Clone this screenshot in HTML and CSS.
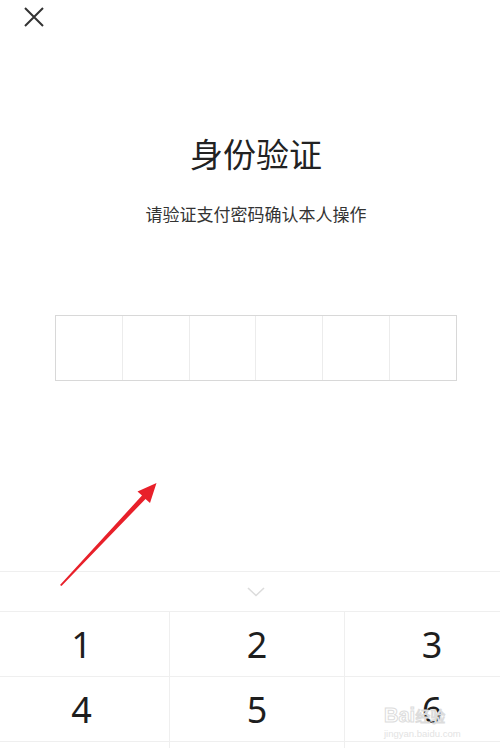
FILE: index.html
```html
<!DOCTYPE html>
<html lang="zh-CN">
<head>
  <meta charset="UTF-8" />
  <meta name="viewport" content="width=device-width, initial-scale=1.0" />
  <title>身份验证</title>
  <link rel="stylesheet" href="styles.css">
</head>
<body>
  <div class="top">
    <svg class="close" width="20" height="20" viewBox="0 0 20 20">
      <path d="M1 1 L19 19 M19 1 L1 19" stroke="#333" stroke-width="2" fill="none" />
    </svg>
  </div>

  <h1 class="title">身份验证</h1>
  <p class="sub">请验证支付密码确认本人操作</p>

  <div class="pwd">
    <span></span><span></span><span></span><span></span><span></span><span></span>
  </div>

  <div class="fold">
    <svg width="18" height="10" viewBox="0 0 18 10">
      <path d="M1 1 L9 8.5 L17 1" stroke="#dcdcdc" stroke-width="1.6" fill="none" />
    </svg>
  </div>

  <div class="keypad">
    <div class="key">1</div>
    <div class="key">2</div>
    <div class="key">3</div>
    <div class="key">4</div>
    <div class="key">5</div>
    <div class="key">6</div>
    <div class="key"></div>
    <div class="key"></div>
    <div class="key"></div>
  </div>

  <!-- red guide arrow drawn over the page -->
  <svg class="arrow" width="500" height="748" viewBox="0 0 500 748">
    <polygon points="60,585 142,495.5 137.5,491.5 156.5,483 150,503 145.5,499 61.5,586" fill="#e8202a" />
  </svg>

  <div class="mark">
    <div class="mark-logo">Bai<span>经验</span></div>
    <div class="mark-url">jingyan.baidu.com</div>
  </div>
</body>
</html>
```

FILE: styles.css
```css
html, body {
  margin: 0;
  padding: 0;
}
body {
  width: 500px;
  height: 748px;
  overflow: hidden;
  position: relative;
  background: #fff;
  color: #222;
  font-family: "Noto Sans CJK SC", "Noto Sans", sans-serif;
}
.top {
  height: 34px;
  padding: 7px 0 0 24px;
  box-sizing: border-box;
}
.close {
  display: block;
}
.title {
  margin: 99px 0 0;
  padding-left: 12px;
  font-size: 33px;
  font-weight: 400;
  line-height: 40px;
  text-align: center;
  color: #222;
}
.sub {
  margin: 29px 0 0;
  padding-left: 12px;
  font-size: 17px;
  line-height: 24px;
  text-align: center;
  color: #333;
}
.pwd {
  display: flex;
  margin: 89px 0 0 55px;
  width: 402px;
  height: 66px;
  box-sizing: border-box;
  border: 1px solid #d8d8d8;
}
.pwd span {
  flex: 1;
  border-left: 1px solid #ececec;
}
.pwd span:first-child {
  border-left: none;
}
.fold {
  margin-top: 190px;
  height: 40px;
  box-sizing: border-box;
  border-top: 1px solid #efefef;
  display: flex;
  align-items: center;
  justify-content: center;
  padding-left: 12px;
}
.fold svg {
  display: block;
}
.keypad {
  display: grid;
  grid-template-columns: repeat(3, 175px);
  grid-auto-rows: 65px;
  margin-left: -6px;
  width: 525px;
}
.key {
  display: flex;
  align-items: center;
  justify-content: center;
  border-top: 1px solid #efefef;
  border-left: 1px solid #efefef;
  font-family: "Noto Sans", sans-serif;
  font-size: 36px;
  color: #1e1e1e;
}
.key:nth-child(3n+1) {
  border-left: none;
}
.arrow {
  position: absolute;
  left: 0;
  top: 0;
  pointer-events: none;
}
.mark {
  position: absolute;
  left: 384px;
  top: 704px;
  font-family: "Liberation Sans", "Noto Sans CJK SC", sans-serif;
}
.mark-logo {
  font-size: 20px;
  font-weight: bold;
  line-height: 22px;
  color: rgba(255, 255, 255, 0.6);
  -webkit-text-stroke: 1px #dcdcdc;
}
.mark-logo span {
  font-size: 15px;
  font-weight: normal;
}
.mark-url {
  font-size: 9.5px;
  line-height: 12px;
  color: #e3e3e3;
}
```
